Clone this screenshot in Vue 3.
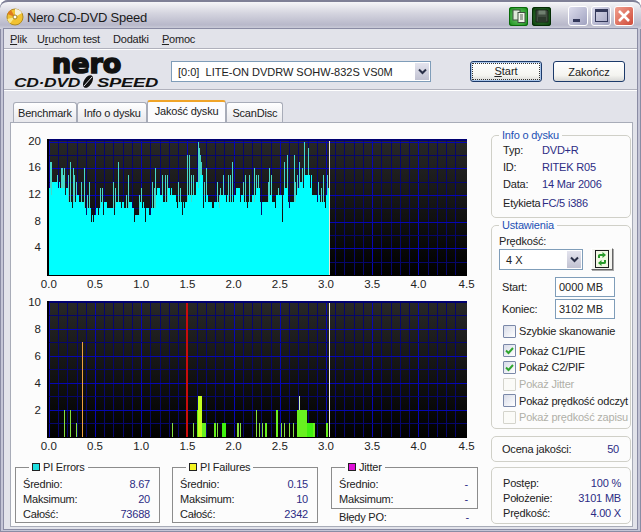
<template>
  <div class="window">
    <div class="titlebar">
      <svg class="app-icon" width="18" height="18" viewBox="0 0 18 18">
        <circle cx="9" cy="9" r="8" fill="#f2c230" stroke="#b08a20" />
        <path d="M9 9 L9 1 A8 8 0 0 1 16 5 Z" fill="#f4f0d8" />
        <path d="M9 9 L1.5 6 A8 8 0 0 1 5 2 Z" fill="#e07a20" />
        <path d="M9 9 L4 15.5 A8 8 0 0 1 1.2 11 Z" fill="#f8e890" />
        <circle cx="9" cy="9" r="2" fill="#fff" stroke="#a08020" />
      </svg>
      <span class="title">Nero CD-DVD Speed</span>
      <div class="title-tools">
        <span class="tool tool-light">
          <svg width="14" height="14" viewBox="0 0 14 14">
            <rect x="1" y="1" width="7" height="10" fill="#dfe8d8" stroke="#405040" />
            <rect x="6" y="3.5" width="7" height="10" fill="#f2f4ea" stroke="#405040" />
            <path d="M8 6h3M8 8h3M8 10h3" stroke="#506050" />
          </svg>
        </span>
        <span class="tool tool-dark">
          <svg width="14" height="14" viewBox="0 0 14 14">
            <path d="M1 1h11l1 1v11H1z" fill="#404c40" stroke="#1a241a" />
            <rect x="3.5" y="1.5" width="7" height="4" fill="#708070" />
            <rect x="3" y="8" width="8" height="5" fill="#2c382c" />
          </svg>
        </span>
      </div>
      <div class="caption-buttons">
        <span class="cap"><i class="cap-min"></i></span>
        <span class="cap"><i class="cap-max"></i></span>
        <span class="cap cap-close">
          <svg width="14" height="14" viewBox="0 0 14 14">
            <path d="M2 2l10 10M12 2L2 12" stroke="#fff" stroke-width="2.6" />
          </svg>
        </span>
      </div>
    </div>

    <div class="client">
      <div class="menu">
        <span class="menu-first"><u>P</u>lik</span>
        <span>U<u>r</u>uchom test</span>
        <span>Dodatki</span>
        <span><u>P</u>omoc</span>
      </div>

      <div class="toolbar">
        <svg class="logo" width="160" height="38" viewBox="0 0 160 38">
          <text x="48" y="21.500" class="logo-nero">nero</text>
          <text x="10" y="36" class="logo-cd" textLength="66" lengthAdjust="spacingAndGlyphs">CD·DVD</text>
          <ellipse cx="84" cy="30.500" rx="4" ry="7" transform="rotate(32 84 30.500)" fill="#111" />
          <path d="M80 35 L88 26" stroke="#e2e3ea" stroke-width="1" />
          <text x="93" y="36" class="logo-cd" textLength="61" lengthAdjust="spacingAndGlyphs">SPEED</text>
        </svg>
        <div class="combo drive">
          <span class="combo-text">[0:0]&nbsp;&nbsp;LITE-ON DVDRW SOHW-832S VS0M</span>
          <span class="combo-arrow">
            <svg width="9" height="7" viewBox="0 0 9 7"><path d="M1 1.5l3.5 3.5L8 1.5" fill="none" stroke="#2a3048" stroke-width="2" /></svg>
          </span>
        </div>
        <button class="btn btn-focus"><span class="focus-ring"><u>S</u>tart</span></button>
        <button class="btn">Zakończ</button>
      </div>

      <div class="tabs">
        <span class="tab">Benchmark</span>
        <span class="tab tab-info">Info o dysku</span>
        <span class="tab tab-active">Jakość dysku</span>
        <span class="tab tab-last">ScanDisc</span>
      </div>

      <div class="panel">
        <div class="left">
          <svg class="chart" width="470" height="162" viewBox="0 0 470 162">
            <defs>
              <linearGradient id="plotbg" x1="0" y1="0" x2="0" y2="1">
                <stop offset="0" stop-color="#282828" />
                <stop offset="1" stop-color="#000" />
              </linearGradient>
            </defs>
            <rect x="33" y="9" width="420" height="136" fill="url(#plotbg)" />
            <g shape-rendering="crispEdges">
              <line v-for="g in topGrid" :key="g.key" :x1="g.x1" :y1="g.y1" :x2="g.x2" :y2="g.y2" :stroke="g.color" />
              <path :d="topBase" stroke="#00ffff" fill="none" />
              <path :d="topSpikes" stroke="#46d8c8" fill="none" />
              <line x1="315.5" y1="11" x2="315.5" y2="145" stroke="#e8e8d8" />
              <line x1="33" y1="9.5" x2="453" y2="9.5" stroke="#000070" stroke-width="2" />
              <line x1="33.5" y1="9" x2="33.5" y2="146" stroke="#000" stroke-width="2" />
              <line x1="33" y1="145.5" x2="453" y2="145.5" stroke="#000" />
            </g>
            <text v-for="l in topY" :key="l.t" class="axis" x="27" :y="l.y" text-anchor="end">{{ l.t }}</text>
            <text v-for="l in xLabels" :key="l.t" class="axis" :x="l.x" y="158" text-anchor="middle">{{ l.t }}</text>
          </svg>

          <svg class="chart" width="470" height="163" viewBox="0 0 470 163">
            <rect x="33" y="9" width="420" height="136" fill="url(#plotbg)" />
            <g shape-rendering="crispEdges">
              <line v-for="g in bottomGrid" :key="g.key" :x1="g.x1" :y1="g.y1" :x2="g.x2" :y2="g.y2" :stroke="g.color" />
              <rect v-for="(b, i) in bottomBars" :key="i" :x="b.x" :y="b.y" :width="b.w" :height="b.h" :fill="b.color" />
              <line x1="33" y1="9.5" x2="453" y2="9.5" stroke="#000070" stroke-width="2" />
              <line x1="33.5" y1="9" x2="33.5" y2="146" stroke="#000" stroke-width="2" />
              <line x1="33" y1="145.5" x2="453" y2="145.5" stroke="#000" />
            </g>
            <text v-for="l in bottomY" :key="l.t" class="axis" x="27" :y="l.y" text-anchor="end">{{ l.t }}</text>
            <text v-for="l in xLabels" :key="l.t" class="axis" :x="l.x" y="158" text-anchor="middle">{{ l.t }}</text>
          </svg>

          <div class="stats">
            <fieldset class="stat stat-a">
              <legend><i class="swatch" style="background: #1fdfe0"></i>PI Errors</legend>
              <div class="row"><span>Średnio:</span><b>8.67</b></div>
              <div class="row"><span>Maksimum:</span><b>20</b></div>
              <div class="row"><span>Całość:</span><b>73688</b></div>
            </fieldset>
            <fieldset class="stat stat-b">
              <legend><i class="swatch" style="background: #f4f420"></i>PI Failures</legend>
              <div class="row"><span>Średnio:</span><b>0.15</b></div>
              <div class="row"><span>Maksimum:</span><b>10</b></div>
              <div class="row"><span>Całość:</span><b>2342</b></div>
            </fieldset>
            <div class="stat-c">
              <fieldset class="stat stat-jitter">
                <legend><i class="swatch" style="background: #e010d8"></i>Jitter</legend>
                <div class="row"><span>Średnio:</span><b>-</b></div>
                <div class="row"><span>Maksimum:</span><b>-</b></div>
              </fieldset>
              <div class="row row-po"><span>Błędy PO:</span><b>-</b></div>
            </div>
          </div>
        </div>

        <div class="right">
          <fieldset class="group info">
            <legend>Info o dysku</legend>
            <div class="info-row"><span>Typ:</span><b>DVD+R</b></div>
            <div class="info-row"><span>ID:</span><b>RITEK R05</b></div>
            <div class="info-row"><span>Data:</span><b>14 Mar 2006</b></div>
            <div class="info-row info-last"><span>Etykieta</span><b>FC/5 i386</b></div>
          </fieldset>

          <fieldset class="group settings">
            <legend>Ustawienia</legend>
            <div class="speed-label">Prędkość:</div>
            <div class="speed-row">
              <div class="combo speed">
                <span class="combo-text">4 X</span>
                <span class="combo-arrow">
                  <svg width="9" height="7" viewBox="0 0 9 7"><path d="M1 1.5l3.5 3.5L8 1.5" fill="none" stroke="#2a3048" stroke-width="2" /></svg>
                </span>
              </div>
              <span class="refresh">
                <svg width="14" height="18" viewBox="0 0 14 18">
                  <rect x=".5" y=".5" width="13" height="17" fill="#f2f8e4" stroke="#1c1c1c" />
                  <path d="M3 8V5.500Q3 4 5 4H7.500V2L11 5 7.500 8V6H5V8Z" fill="#2a9a2a" />
                  <path d="M11 10v2.500Q11 14 9 14H6.500v2L3 13l3.500-3v2H9v-2Z" fill="#2a9a2a" />
                </svg>
              </span>
            </div>
            <div class="field field-start"><span>Start:</span><span class="input">0000 MB</span></div>
            <div class="field"><span>Koniec:</span><span class="input">3102 MB</span></div>
            <div class="checks">
              <div v-for="c in checks" :key="c.label" class="check" :class="{ disabled: c.disabled, gap: c.gap }">
                <span class="box">
                  <svg v-if="c.on" width="11" height="11" viewBox="0 0 11 11">
                    <path d="M2 5.500l2.500 2.500L9 3" fill="none" stroke="#2fa52f" stroke-width="2" />
                  </svg>
                </span>
                <span class="check-label">{{ c.label }}</span>
              </div>
            </div>
          </fieldset>

          <div class="box-round score"><span>Ocena jakości:</span><b>50</b></div>

          <div class="box-round progress">
            <div class="row"><span>Postęp:</span><b>100 %</b></div>
            <div class="row"><span>Położenie:</span><b>3101 MB</b></div>
            <div class="row"><span>Prędkość:</span><b>4.00 X</b></div>
          </div>
        </div>
      </div>
    </div>
  </div>
</template>

<script setup>
// plot geometry, in svg units
const plotLeft = 33
const plotRight = 453
const x0 = 34.8
const perUnit = 92.4

const MAJOR = '#0606b4'
const MINOR = '#06066c'

const grid = (bottom, top, steps, majorEvery, prefix) => {
  const lines = []
  for (let i = 0; i <= 44; i++) {
    const x = Math.round(x0 + (i * perUnit) / 10) + 0.5
    lines.push({
      key: prefix + 'v' + i, x1: x, x2: x, y1: 10, y2: 145,
      color: i % 5 === 0 ? MAJOR : MINOR
    })
  }
  for (let i = 1; i <= steps; i++) {
    const y = Math.round(bottom - ((bottom - top) * i) / steps) + 0.5
    lines.push({
      key: prefix + 'h' + i, x1: plotLeft, x2: plotRight, y1: y, y2: y,
      color: i % majorEvery === 0 ? MAJOR : MINOR
    })
  }
  return lines
}

const topGrid = grid(145, 11.7, 10, 2, 't')
const bottomGrid = grid(144.7, 9.7, 10, 2, 'b')

const xLabels = ['0.0', '0.5', '1.0', '1.5', '2.0', '2.5', '3.0', '3.5', '4.0', '4.5'].map((t, i) => ({
  t,
  x: x0 + i * perUnit * 0.5 + (i === 9 ? 2 : 0)
}))
const topY = [20, 16, 12, 8, 4].map((v) => ({ t: v, y: 145 - v * 6.67 + 3 }))
const bottomY = [10, 8, 6, 4, 2].map((v) => ({ t: v, y: 144.7 - v * 13.5 + 4 }))

// solid level of the PIE graph, one entry per 4 pixels
const levels = [
  13, 14, 14, 13, 13, 11, 11, 12, 11, 10, 10, 9, 10, 11, 11, 10, 10, 11, 11, 10, 11, 10, 9, 11,
  10, 10, 10, 13, 12, 11, 13, 12, 11, 11, 11, 12, 12, 14, 15, 12, 11, 11, 11, 12, 12, 11, 12, 13,
  12, 11, 11, 12, 13, 11, 11, 12, 11, 12, 12, 13, 11, 11, 13, 14, 15, 15, 12, 12, 11, 12, 13, 12
]

// single pixel peaks and dips [pixel, value]
const peaks = [
  [0, 16], [3, 17], [9, 15], [14, 16], [16, 16], [20, 15], [22, 17], [25, 16], [28, 14], [33, 14],
  [36, 16], [38, 9], [43, 8], [50, 9], [55, 9], [70, 17], [80, 15], [86, 8], [97, 8], [102, 9],
  [107, 16], [114, 15], [117, 15], [134, 9], [139, 18], [141, 18], [150, 20], [151, 19], [152, 18],
  [153, 17], [155, 10], [165, 10], [172, 13], [175, 15], [180, 15], [184, 17], [201, 15], [206, 16],
  [208, 15], [213, 9], [220, 14], [230, 13], [234, 8], [239, 18], [246, 18], [251, 17],
  [254, 16], [256, 20], [262, 13], [270, 14], [277, 10], [279, 15]
]
const peakAt = new Map(peaks)

let baseD = ''
let spikeD = ''
for (let i = 0; i < 282; i++) {
  const x = 34.5 + i
  let level = levels[Math.min(Math.floor(i / 4), levels.length - 1)]
  if (i % 7 === 3) level -= 1
  let p = peakAt.get(i)
  // the thin grass on top of the solid part
  if (p === undefined && (i * 7) % 13 < 2) p = level + 2 + (i % 3)
  if (p !== undefined && p < level) level = p
  const yBase = 145 - level * 6.67
  baseD += `M${x} 145V${yBase.toFixed(0)}`
  if (p !== undefined && p > level) {
    spikeD += `M${x} ${yBase.toFixed(0)}V${(145 - p * 6.67).toFixed(0)}`
  }
}
const topBase = baseD
const topSpikes = spikeD

const G = '#68f020'
const L = '#84e040'
const bar = (x, w, v, color = L) => ({
  x, w,
  y: Math.round(144.7 - v * 13.5),
  h: Math.round(v * 13.5),
  color
})

const bottomBars = [
  bar(34, 1, 2), bar(50, 1, 2), bar(56, 1, 2), bar(62, 1, 1),
  bar(68, 1, 7, '#f0a040'), bar(158, 1, 1), bar(172, 2, 10, '#c80c0c'), bar(179, 1, 1),
  bar(183, 2, 2, G), bar(184, 4, 3, '#c4ff20'), bar(188, 4, 1, G),
  bar(200, 2, 1, G), bar(203, 1, 1), bar(208, 4, 1, '#40f010'), bar(223, 2, 1), bar(226, 1, 1),
  bar(242, 1, 2), bar(245, 1, 1), bar(248, 1, 1), bar(251, 2, 1, G), bar(262, 2, 2, G),
  bar(267, 1, 1), bar(270, 1, 1), bar(275, 1, 1), bar(279, 1, 1),
  bar(285, 1, 3, '#d0f0b0'), bar(283, 10, 2, G), bar(293, 6, 1, '#40f010'), bar(299, 2, 1, G),
  bar(312, 2, 1, G), bar(315, 1, 10, '#f0f0e0')
]

const checks = [
  { label: 'Szybkie skanowanie' },
  { label: 'Pokaż C1/PIE', on: true, gap: true },
  { label: 'Pokaż C2/PIF', on: true },
  { label: 'Pokaż Jitter', disabled: true },
  { label: 'Pokaż prędkość odczyt' },
  { label: 'Pokaż prędkość zapisu', disabled: true }
]
</script>

<style>
html,
body {
  margin: 0;
  background: #fff;
}
</style>

<style scoped>
.window {
  width: 641px;
  height: 532px;
  box-sizing: border-box;
  display: flex;
  flex-direction: column;
  padding: 0 4px 3px;
  background: #c4c5d6;
  border-radius: 8px 8px 0 0;
  box-shadow: inset 0 0 0 1px #8a8ca4;
  font-family: 'Liberation Sans', Arial, sans-serif;
  font-size: 11px;
  letter-spacing: -0.2px;
  color: #222;
  overflow: hidden;
}

.titlebar {
  height: 29px;
  flex: none;
  margin: 0 -4px;
  padding: 0 7px 0 6px;
  display: flex;
  align-items: center;
  box-sizing: border-box;
  border-top: 2px solid #7f8096;
  border-radius: 8px 8px 0 0;
  background: linear-gradient(180deg, #f6f6f8 0%, #d6d6e0 40%, #b8b8ca 85%, #cfd0dc 100%);
}

.app-icon {
  flex: none;
  margin-top: 3px;
}

.title {
  margin-left: 3px;
  font-size: 13px;
  color: #1a1a1a;
  margin-top: 3px;
}

.title-tools {
  margin-left: auto;
  display: flex;
  gap: 4px;
}

.tool {
  width: 19px;
  height: 19px;
  display: flex;
  align-items: center;
  justify-content: center;
  border-radius: 3px;
  margin-top: 1px;
}

.tool-light {
  background: radial-gradient(circle, #7cd07c, #108810);
  box-shadow: inset 0 0 0 1px #0a6a0a;
}

.tool-dark {
  background: radial-gradient(circle, #3e7a3e, #063c06);
  box-shadow: inset 0 0 0 1px #042c04;
}

.caption-buttons {
  margin-left: 17px;
  display: flex;
  gap: 3px;
}

.cap {
  width: 20px;
  height: 20px;
  box-sizing: border-box;
  position: relative;
  display: flex;
  align-items: center;
  justify-content: center;
  border: 1px solid #fff;
  border-radius: 3px;
  background: linear-gradient(135deg, #dcdcec, #a0a2c0);
}

.cap-min {
  position: absolute;
  left: 4px;
  bottom: 3px;
  width: 7px;
  height: 3px;
  background: #33385a;
}

.cap-max {
  width: 11px;
  height: 9px;
  border: 1px solid #33385a;
  border-top-width: 3px;
}

.cap-close {
  background: linear-gradient(135deg, #f0a090, #d04a38);
}

.client {
  flex: 1;
  min-height: 0;
  display: flex;
  flex-direction: column;
  background: #e2e3ea;
  box-shadow: 0 0 0 1px #8a8ca4;
}

.menu {
  height: 20px;
  flex: none;
  box-sizing: border-box;
  padding: 1px 6px 0;
  display: flex;
  gap: 13px;
  align-items: center;
  border-bottom: 1px solid #b0b1bc;
  box-shadow: 0 1px 0 #fff;
}

.menu-first {
  margin-right: -3px;
}

.toolbar {
  height: 38px;
  flex: none;
  display: flex;
  align-items: center;
  border-bottom: 1px solid #b0b1bc;
  box-shadow: 0 1px 0 #fff;
  margin-top: 1px;
  padding-top: 1px;
  box-sizing: content-box;
}

.logo {
  margin-right: 7px;
  flex: none;
  overflow: visible;
}

.logo-nero {
  font-family: 'DejaVu Sans', sans-serif;
  font-weight: 700;
  font-size: 27px;
  letter-spacing: 0;
  fill: #111;
  stroke: #111;
  stroke-width: 1.6px;
}

.logo-cd {
  font-family: 'Liberation Sans', sans-serif;
  font-weight: 700;
  font-style: italic;
  font-size: 12px;
  fill: #111;
}

.combo {
  display: flex;
  box-sizing: border-box;
  background: #fff;
  border: 1px solid #7f9db9;
  align-items: center;
  height: 21px;
}

.drive {
  width: 260px;
  margin-top: 3px;
}

.combo-text {
  flex: 1;
  padding-left: 6px;
  white-space: nowrap;
  letter-spacing: 0;
}

.combo-arrow {
  width: 16px;
  height: 19px;
  display: flex;
  align-items: center;
  justify-content: center;
  background: linear-gradient(180deg, #e6e6f0, #bfc0d0);
  box-shadow: inset 0 0 0 1px #fff;
}

.btn {
  width: 72px;
  height: 21px;
  margin: 3px 0 0 39px;
  padding: 0;
  border: 1px solid #1c3a6a;
  border-radius: 3px;
  background: linear-gradient(180deg, #fff, #f4f4f0 70%, #d8d8d6);
  font: inherit;
  letter-spacing: 0;
  color: #222;
}

.btn + .btn {
  margin-left: 11px;
}

.btn-focus {
  box-shadow: inset 0 0 0 1px #a8c4e8;
}

.focus-ring {
  display: block;
  margin: 1px;
  line-height: 15px;
  border: 1px dotted #333;
}

.tabs {
  display: flex;
  height: 22px;
  margin: 10px 0 0 9px;
  align-items: flex-end;
  position: relative;
  z-index: 1;
  flex: none;
}

.tab {
  height: 20px;
  box-sizing: border-box;
  padding: 4px 4px 0;
  border: 1px solid #a8acb8;
  border-bottom: none;
  border-radius: 3px 3px 0 0;
  background: linear-gradient(180deg, #fff, #e8e8ec);
  white-space: nowrap;
}

.tab-info {
  padding: 4px 5px 0 6px;
}

.tab-active {
  height: 22px;
  background: #fcfcfe;
  border-top: 2px solid #f0a428;
  padding: 3px 7px 0;
}

.tab-last {
  padding: 4px 5px 0;
}

.panel {
  flex: 1;
  min-height: 0;
  margin: 0 4px 2px 6px;
  display: flex;
  background: #fcfcfc;
  border: 1px solid #a8acb8;
  box-sizing: border-box;
}

.left {
  width: 480px;
  flex: none;
  padding: 7px 0 0 3px;
  box-sizing: border-box;
}

.chart {
  display: block;
}

.axis {
  font-family: 'Liberation Sans', sans-serif;
  font-size: 11.5px;
  letter-spacing: 0;
  fill: #222;
}

.stats {
  margin: 5px 0 0 1px;
  display: flex;
  align-items: flex-start;
}

fieldset {
  margin: 0;
  padding: 0;
  min-width: 0;
  box-sizing: border-box;
}

legend {
  padding: 0 3px;
  line-height: 14px;
}

.stat {
  border: 1px solid #8c8c8c;
  padding: 3px 9px 0 7px;
  height: 63px;
}

.stat legend {
  margin-left: 6px;
}

.stat-a {
  width: 145px;
  margin-right: 12px;
}

.stat-b {
  width: 146px;
  margin-right: 13px;
}

.stat-c {
  width: 147px;
}

.stat-jitter {
  height: 49px;
}

.swatch {
  display: inline-block;
  width: 6px;
  height: 6px;
  border: 1px solid #222;
  margin-right: 3px;
}

.row {
  display: flex;
  justify-content: space-between;
  height: 15px;
  line-height: 15px;
  white-space: nowrap;
}

.row b,
.info-row b,
.score b {
  font-weight: 400;
  color: #2c2c84;
}

.row-po {
  margin-top: 1px;
  padding: 0 9px 0 8px;
}

.right {
  width: 140px;
  flex: none;
  padding-top: 5px;
}

.group {
  border: 1px solid #d0d0c8;
  border-radius: 5px;
  padding: 0 5px;
}

.group legend {
  margin-left: 2px;
  color: #1c50b4;
}

.info {
  padding-bottom: 5px;
}

.info-row {
  display: flex;
  height: 17px;
  line-height: 17px;
  padding-left: 6px;
  white-space: nowrap;
}

.info-row span {
  width: 39px;
  flex: none;
}

.info-last {
  margin-top: 2px;
}

.settings {
  padding-bottom: 2px;
}

.speed-label {
  height: 16px;
  line-height: 16px;
  padding-left: 2px;
  margin-top: 1px;
}

.speed-row {
  display: flex;
  padding-left: 2px;
  gap: 8px;
}

.speed {
  width: 84px;
}

.refresh {
  width: 22px;
  height: 22px;
  box-sizing: border-box;
  display: flex;
  align-items: center;
  justify-content: center;
  background: #f4f4f0;
  border: 1px solid;
  border-color: #fff #666 #666 #fff;
  box-shadow: 1px 1px 0 #aaa;
  margin-top: -1px;
}

.field {
  display: flex;
  align-items: center;
  justify-content: space-between;
  height: 20px;
  margin-top: 2px;
  padding: 0 10px 0 5px;
}

.field-start {
  margin-top: 7px;
}

.input {
  width: 60px;
  height: 20px;
  box-sizing: border-box;
  border: 1px solid #7f9db9;
  background: #fff;
  padding-left: 3px;
  line-height: 18px;
  letter-spacing: 0;
}

.checks {
  margin: 4px -4px 0 0;
}

.check {
  display: flex;
  align-items: center;
  height: 16.6px;
  padding-left: 6px;
  white-space: nowrap;
}

.check.gap {
  margin-top: 3px;
}

.box {
  width: 13px;
  height: 13px;
  flex: none;
  box-sizing: border-box;
  display: flex;
  align-items: center;
  justify-content: center;
  border: 1px solid #7a88a8;
  border-radius: 1px;
  background: linear-gradient(135deg, #d8dce8, #fff);
  margin-right: 3px;
}

.disabled {
  color: #b0b0a8;
}

.disabled .box {
  border-color: #d4d4cc;
  background: #fbfbf8;
}

.box-round {
  border: 1px solid #d0d0c8;
  border-radius: 5px;
  box-sizing: border-box;
}

.score {
  margin-top: 7px;
  height: 26px;
  display: flex;
  align-items: center;
  justify-content: space-between;
  padding: 0 11px 0 10px;
}

.progress {
  margin-top: 5px;
  height: 57px;
  padding: 8px 9px 0 11px;
}
</style>
